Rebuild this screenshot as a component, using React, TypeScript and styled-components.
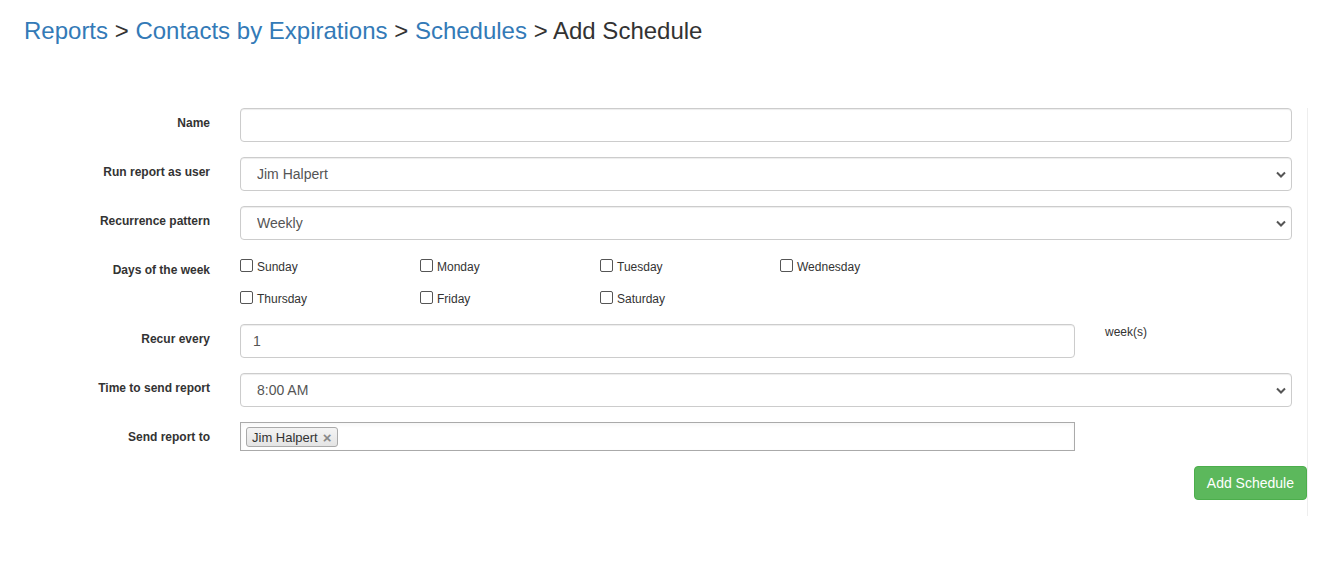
import React from "react";
import styled, { createGlobalStyle } from "styled-components";

const Global = createGlobalStyle`
  html, body { margin: 0; padding: 0; background: #fff; }
  body { font-family: "Liberation Sans", Arial, sans-serif; color: #333; }
  * { box-sizing: border-box; }
`;

const Page = styled.div`
  width: 1330px;
  min-height: 584px;
`;

const Breadcrumb = styled.h3`
  margin: 0;
  padding: 18px 0 0 24px;
  height: 108px;
  font-size: 24px;
  font-weight: 500;
  line-height: 26px;
  color: #333;
`;

const Crumb = styled.a`
  color: #337ab7;
  text-decoration: none;
`;

const Form = styled.form`
  width: 1308px;
  border-right: 1px solid #eee;
  padding-bottom: 16px;
`;

const Row = styled.div`
  display: grid;
  grid-template-columns: 210px 1fr;
  column-gap: 30px;
  padding-right: 15px;
  margin-bottom: 15px;
`;

const Label = styled.label`
  text-align: right;
  font-size: 12px;
  font-weight: bold;
  line-height: 17px;
  padding-top: 7px;
  color: #333;
`;

const controlBase = `
  width: 100%;
  height: 34px;
  border: 1px solid #ccc;
  border-radius: 4px;
  box-shadow: inset 0 1px 1px rgba(0,0,0,0.075);
  background: #fff;
  font-family: "Liberation Sans", Arial, sans-serif;
  font-size: 14px;
  color: #555;
  outline: none;
`;

const Input = styled.input`
  ${controlBase}
  padding: 6px 12px;
`;

const SelectWrap = styled.div`
  position: relative;
`;

const Select = styled.select`
  ${controlBase}
  appearance: none;
  padding: 6px 16px;
`;

const Chevron = styled.svg`
  position: absolute;
  right: 6px;
  top: 14px;
  width: 10px;
  height: 7px;
  pointer-events: none;
`;

const Days = styled.div`
  display: grid;
  grid-template-columns: repeat(4, 180px);
  grid-auto-rows: 17px;
  row-gap: 15px;
  padding-top: 2px;
  padding-bottom: 3px;
`;

const Day = styled.label`
  display: flex;
  align-items: center;
  font-size: 12px;
  color: #333;
  line-height: 17px;
`;

const DayText = styled.span`
  position: relative;
  top: 2px;
`;

const Box = styled.span`
  display: inline-block;
  width: 13px;
  height: 13px;
  border: 1px solid #555;
  border-radius: 2px;
  margin-right: 4px;
  background: #fff;
`;

const Split = styled.div`
  display: grid;
  grid-template-columns: 835px auto;
  column-gap: 30px;
`;

const Addon = styled.span`
  font-size: 12px;
  line-height: 17px;
  color: #333;
`;

const TagBox = styled.div`
  height: 29px;
  border: 1px solid #aaa;
  background: #fff;
  box-shadow: inset 0 2px 4px rgba(0,0,0,0.04);
  padding: 4px 5px;
  display: flex;
  align-items: flex-start;
`;

const Tag = styled.span`
  display: inline-flex;
  align-items: center;
  height: 20px;
  padding: 0 5px;
  border: 1px solid #aaa;
  border-radius: 3px;
  background: linear-gradient(#f4f4f4, #e4e4e4);
  font-size: 13px;
  color: #333;
  gap: 5px;
`;

const Remove = styled.span`
  color: #888;
  font-weight: bold;
  font-size: 15px;
  line-height: 1;
`;

const Actions = styled.div`
  display: flex;
  justify-content: flex-end;
`;

const Button = styled.button`
  height: 34px;
  padding: 6px 12px;
  border: 1px solid #4cae4c;
  border-radius: 4px;
  background: #5cb85c;
  color: #fff;
  font-family: "Liberation Sans", Arial, sans-serif;
  font-size: 14px;
  line-height: 20px;
  cursor: pointer;
`;

const ChevronIcon = () => (
  <Chevron viewBox="0 0 10 7">
    <path d="M1 1.5 L5 5.5 L9 1.5" fill="none" stroke="#555" strokeWidth="2" />
  </Chevron>
);

const SelectField = ({ value }: { value: string }) => (
  <SelectWrap>
    <Select defaultValue={value}>
      <option>{value}</option>
    </Select>
    <ChevronIcon />
  </SelectWrap>
);

const days = ["Sunday", "Monday", "Tuesday", "Wednesday", "Thursday", "Friday", "Saturday"];

export default function App() {
  return (
    <Page>
      <Global />
      <Breadcrumb>
        <Crumb href="#">Reports</Crumb> &gt; <Crumb href="#">Contacts by Expirations</Crumb> &gt;{" "}
        <Crumb href="#">Schedules</Crumb> &gt; Add Schedule
      </Breadcrumb>
      <Form onSubmit={(e) => e.preventDefault()}>
        <Row>
          <Label>Name</Label>
          <Input type="text" />
        </Row>
        <Row>
          <Label>Run report as user</Label>
          <SelectField value="Jim Halpert" />
        </Row>
        <Row>
          <Label>Recurrence pattern</Label>
          <SelectField value="Weekly" />
        </Row>
        <Row>
          <Label>Days of the week</Label>
          <Days>
            {days.map((d) => (
              <Day key={d}>
                <Box />
                <DayText>{d}</DayText>
              </Day>
            ))}
          </Days>
        </Row>
        <Row>
          <Label>Recur every</Label>
          <Split>
            <Input type="text" defaultValue="1" />
            <Addon>week(s)</Addon>
          </Split>
        </Row>
        <Row>
          <Label>Time to send report</Label>
          <SelectField value="8:00 AM" />
        </Row>
        <Row>
          <Label>Send report to</Label>
          <Split>
            <TagBox>
              <Tag>
                Jim Halpert <Remove>×</Remove>
              </Tag>
            </TagBox>
          </Split>
        </Row>
        <Actions>
          <Button type="submit">Add Schedule</Button>
        </Actions>
      </Form>
    </Page>
  );
}
